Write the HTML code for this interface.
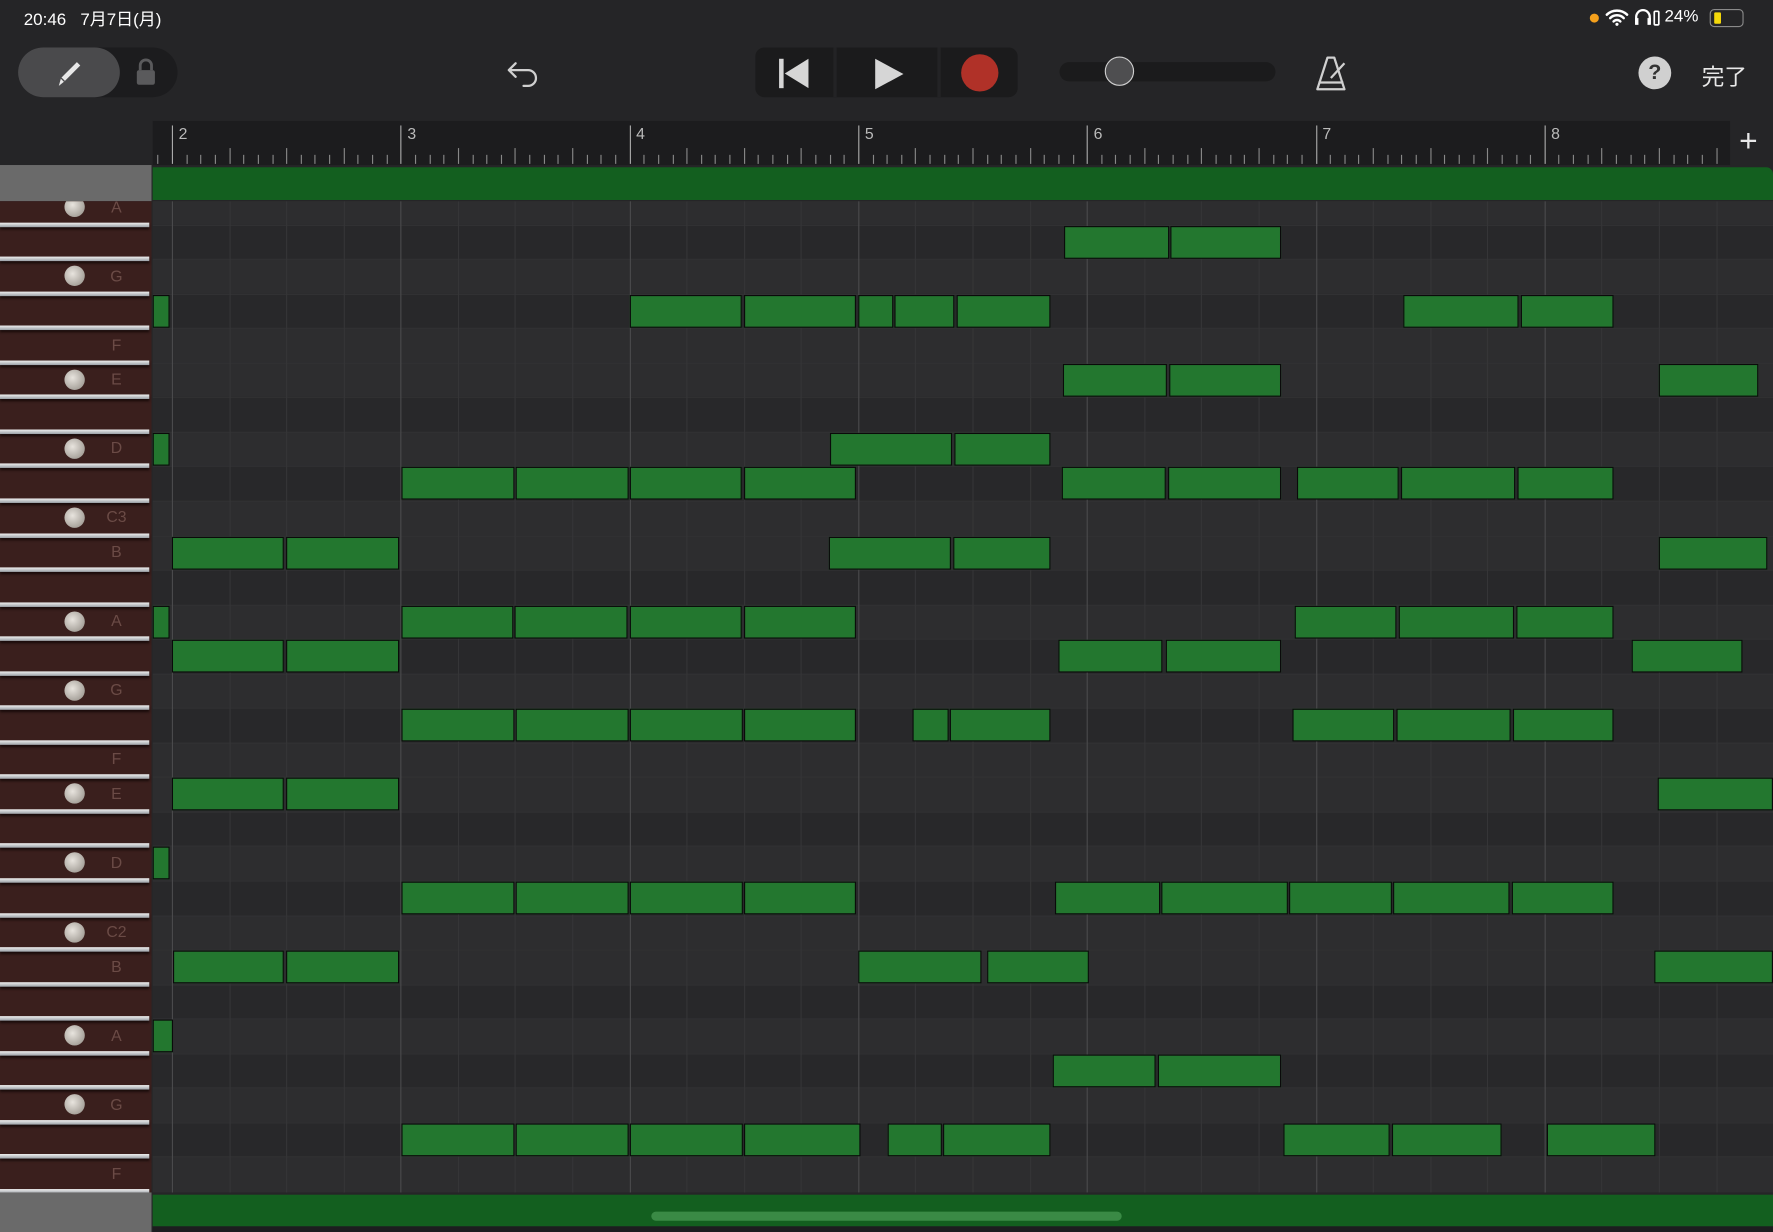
<!DOCTYPE html>
<html><head><meta charset="utf-8">
<style>
html,body{margin:0;padding:0;background:#1d1d1f;overflow:hidden;width:1773px;height:1232px}
#s{position:absolute;left:0;top:0;width:1568px;height:1090px;transform-origin:0 0;transform:scale(1.13074,1.13028);background:#252527;font-family:"Liberation Sans","Noto Sans CJK JP",sans-serif;overflow:hidden}
.a{position:absolute}
.lbl{position:absolute;left:92px;width:22px;text-align:center;color:#6b4b46;font-size:14px;line-height:16px}
.dot{position:absolute;left:57px;width:18px;height:18px;border-radius:50%;background:radial-gradient(circle at 40% 40%,#e8e4de,#a9a49d 70%,#8a857f)}
</style></head><body>
<div id="s">
<!-- status -->
<div class="a" style="left:21px;top:6px;color:#fff;font-size:15px">20:46&nbsp;&nbsp;&nbsp;7月7日(月)</div>
<div class="a" style="left:1406px;top:12px;width:8px;height:8px;border-radius:50%;background:#f4a01c"></div>
<svg class="a" style="left:1419px;top:7px" width="22" height="16" viewBox="0 0 22 16"><path d="M2 6a13 13 0 0 1 18 0M5 9a8.5 8.5 0 0 1 12 0M8 12a4 4 0 0 1 6 0" stroke="#fff" stroke-width="2.2" fill="none" stroke-linecap="round"/><circle cx="11" cy="14.5" r="1.4" fill="#fff"/></svg>
<svg class="a" style="left:1444px;top:7px" width="26" height="16" viewBox="0 0 26 16"><path d="M3 14V8a6 6 0 0 1 12 0v6" stroke="#fff" stroke-width="2" fill="none"/><rect x="2" y="9" width="3" height="6" fill="#fff"/><rect x="13" y="9" width="3" height="6" fill="#fff"/><rect x="19" y="3" width="4" height="12" rx="1" stroke="#fff" stroke-width="1.5" fill="none"/></svg>
<div class="a" style="left:1472px;top:6px;color:#fff;font-size:15px">24%</div>
<div class="a" style="left:1512px;top:8px;width:28px;height:14px;border:1.5px solid #8a8a8a;border-radius:4px"></div>
<div class="a" style="left:1516px;top:11px;width:6px;height:10px;background:#f5d90a;border-radius:1px"></div>
<!-- toolbar -->
<div class="a" style="left:16px;top:42px;width:141px;height:44px;border-radius:22px;background:#1c1c1e"></div>
<div class="a" style="left:16px;top:42px;width:90px;height:44px;border-radius:22px;background:#4a4a4c"></div>
<svg class="a" style="left:46px;top:50px" width="30" height="30" viewBox="0 0 30 30"><path d="M6 26l2-7L22 5l3 3L11 22z" fill="#e8e8e8"/><path d="M8 19l3 3" stroke="#4a4a4c" stroke-width="1.2"/></svg>
<svg class="a" style="left:118px;top:50px" width="22" height="28" viewBox="0 0 22 28"><path d="M6 12V8a5 5 0 0 1 10 0v4" stroke="#5a5a5c" stroke-width="2.5" fill="none"/><rect x="3" y="12" width="16" height="13" rx="2" fill="#5a5a5c"/></svg>
<svg class="a" style="left:446px;top:48px" width="34" height="34" viewBox="0 0 34 34"><path d="M10 8l-6 6 6 6M4 14h17a7 7 0 0 1 0 14h-4" stroke="#d0d0d0" stroke-width="2" fill="none" stroke-linecap="round" stroke-linejoin="round"/></svg>
<div class="a" style="left:668px;top:42px;width:232px;height:44px;border-radius:8px;background:#1b1b1c"></div>
<div class="a" style="left:737px;top:42px;width:3px;height:44px;background:#232325"></div>
<div class="a" style="left:829px;top:42px;width:3px;height:44px;background:#232325"></div>
<svg class="a" style="left:688px;top:50px" width="30" height="30" viewBox="0 0 30 30"><rect x="1" y="2" width="4" height="26" fill="#d6d6d6"/><path d="M27 2v26L6 15z" fill="#d6d6d6"/></svg>
<svg class="a" style="left:772px;top:50px" width="28" height="30" viewBox="0 0 28 30"><path d="M2 2v27l25-13.5z" fill="#d6d6d6"/></svg>
<div class="a" style="left:850px;top:48px;width:33px;height:33px;border-radius:50%;background:#b03128"></div>
<div class="a" style="left:937px;top:55px;width:191px;height:17px;border-radius:9px;background:#1b1b1c"></div>
<div class="a" style="left:977px;top:50px;width:24px;height:24px;border-radius:50%;background:#4e4e50;border:1.5px solid #cfcfcf"></div>
<svg class="a" style="left:1162px;top:48px" width="32" height="34" viewBox="0 0 32 34"><path d="M12 3h6l9 28H3z" stroke="#d0d0d0" stroke-width="2" fill="none" stroke-linejoin="round"/><path d="M4 25h22M15 21L27 8" stroke="#d0d0d0" stroke-width="2"/></svg>
<div class="a" style="left:1449px;top:50px;width:29px;height:29px;border-radius:50%;background:#d0d0d0;color:#333;font-size:19px;font-weight:bold;text-align:center;line-height:29px">?</div>
<div class="a" style="left:1505px;top:52px;color:#e8e8e8;font-size:20px">完了</div>
<!-- ruler -->
<div class="a" style="left:135px;top:107px;width:1395px;height:39px;background:#1c1c1e"></div>
<div id="ruler"></div>
<div class="a" style="left:1538px;top:110px;color:#e8e8e8;font-size:28px;line-height:30px">+</div>
<div class="a" style="left:0;top:146px;width:134px;height:32px;background:#6a6a6a"></div>
<div class="a" style="left:135px;top:148px;width:1433px;height:29px;background:#135f1f;border-radius:0 6px 0 0"></div>
<!-- grid -->
<div class="a" id="grid" style="left:135px;top:178px;width:1433px;height:877px;background:#2a2a2c;overflow:hidden"></div>
<div class="a" id="kb" style="left:0;top:178px;width:134px;height:877px;background:#3a1f1d;overflow:hidden">
<div class="lbl" style="top:-3px">A</div>
<div class="lbl" style="top:58px">G</div>
<div class="lbl" style="top:119px">F</div>
<div class="lbl" style="top:149px">E</div>
<div class="lbl" style="top:210px">D</div>
<div class="lbl" style="top:271px">C3</div>
<div class="lbl" style="top:302px">B</div>
<div class="lbl" style="top:363px">A</div>
<div class="lbl" style="top:424px">G</div>
<div class="lbl" style="top:485px">F</div>
<div class="lbl" style="top:516px">E</div>
<div class="lbl" style="top:577px">D</div>
<div class="lbl" style="top:638px">C2</div>
<div class="lbl" style="top:669px">B</div>
<div class="lbl" style="top:730px">A</div>
<div class="lbl" style="top:791px">G</div>
<div class="lbl" style="top:852px">F</div>
</div>
<!-- bottom -->
<div class="a" style="left:0;top:1055px;width:134px;height:35px;background:#6a6a6a"></div>
<div class="a" style="left:135px;top:1057px;width:1433px;height:28px;background:#135f1f"></div>
<div class="a" style="left:576px;top:1072px;width:416px;height:8px;border-radius:4px;background:#3a8a45"></div>
<div class="a" style="left:135px;top:1085px;width:1433px;height:5px;background:#1d1d1f"></div>
</div>
<script>
(function(){
var R=document.getElementById('ruler'),G=document.getElementById('grid'),K=document.getElementById('kb'),h='';
var bw=202.3,x0=152;
for(var i=-1;i<=110;i++){var x=x0+i*bw/16;if(x<137||x>1528)continue;var m=((i%16)+16)%16;
 if(m==0){h+='<div class="a" style="left:'+x+'px;top:111px;width:1px;height:34px;background:#aaa"></div>';var n=Math.round((x-x0)/bw)+2;h+='<div class="a" style="left:'+(x+6)+'px;top:110px;color:#bbb;font-size:14px">'+n+'</div>';}
 else{var t=m%4==0?14:8;h+='<div class="a" style="left:'+x+'px;top:'+(145-t)+'px;width:1px;height:'+t+'px;background:#888"></div>';}}
R.innerHTML=h;
var rh=30.55,black=[1,3,6,8,11,13,15,18,20,23,25,27];
var g='';
for(var k=0;k<29;k++){var tp=-10+rh*k;var c=black.indexOf(k)>=0?'#28282a':'#2d2d2f';g+='<div class="a" style="left:0;top:'+tp+'px;width:1433px;height:'+rh+'px;background:'+c+';border-top:1px solid #313133"></div>';}
for(var i=-1;i<30;i++){var x=x0-135+i*bw/4;if(x<0)continue;g+='<div class="a" style="left:'+x+'px;top:0;width:1px;height:877px;background:'+(i%4==0?'#4a4a4c':'#353537')+'"></div>';}
var N={1:[[941,1034],[1035,1133]],3:[[135,150],[557,656],[658,757],[759,790],[791,844],[846,929],[1241,1343],[1345,1427]],5:[[940,1032],[1034,1133],[1467,1555]],7:[[135,150],[734,842],[844,929]],8:[[355,455],[456,556],[557,656],[658,757],[939,1031],[1033,1133],[1147,1237],[1239,1340],[1342,1427]],10:[[152,251],[253,353],[733,841],[843,929],[1467,1563]],12:[[135,150],[355,454],[455,555],[557,656],[658,757],[1145,1235],[1237,1339],[1341,1427]],13:[[152,251],[253,353],[936,1028],[1031,1133],[1443,1541]],15:[[355,455],[456,556],[557,657],[658,757],[807,839],[840,929],[1143,1233],[1235,1336],[1338,1427]],17:[[152,251],[253,353],[1466,1568]],19:[[135,150]],20:[[355,455],[456,556],[557,657],[658,757],[933,1026],[1027,1139],[1140,1231],[1232,1335],[1337,1427]],22:[[153,251],[253,353],[759,868],[873,963],[1463,1568]],24:[[135,153]],25:[[931,1022],[1024,1133]],27:[[355,455],[456,556],[557,657],[658,761],[785,833],[834,929],[1135,1229],[1231,1328],[1368,1464]]};
for(var kk2 in N){var tq=-10+rh*Number(kk2)+1;N[kk2].forEach(function(p){g+='<div class="a" style="left:'+(p[0]-135)+'px;top:'+tq+'px;width:'+(p[1]-p[0]-2)+'px;height:27px;background:#23772f;border:1px solid #0a0a0a"></div>';});}
G.innerHTML=g;
var kk='';
for(var k=0;k<=29;k++){var y=-10+rh*k-2;kk+='<div class="a" style="left:0;top:'+y+'px;width:132px;height:4px;background:linear-gradient(#f0f0f0,#9aa0a6);box-shadow:0 2px 2px #1a0c0b"></div>';}
var dots=[0,2,5,7,9,12,14,17,19,21,24,26];
dots.forEach(function(k){kk+='<div class="dot" style="top:'+(-10+rh*k+6)+'px"></div>';});
K.insertAdjacentHTML('afterbegin',kk);
})();
</script>
</body></html>
